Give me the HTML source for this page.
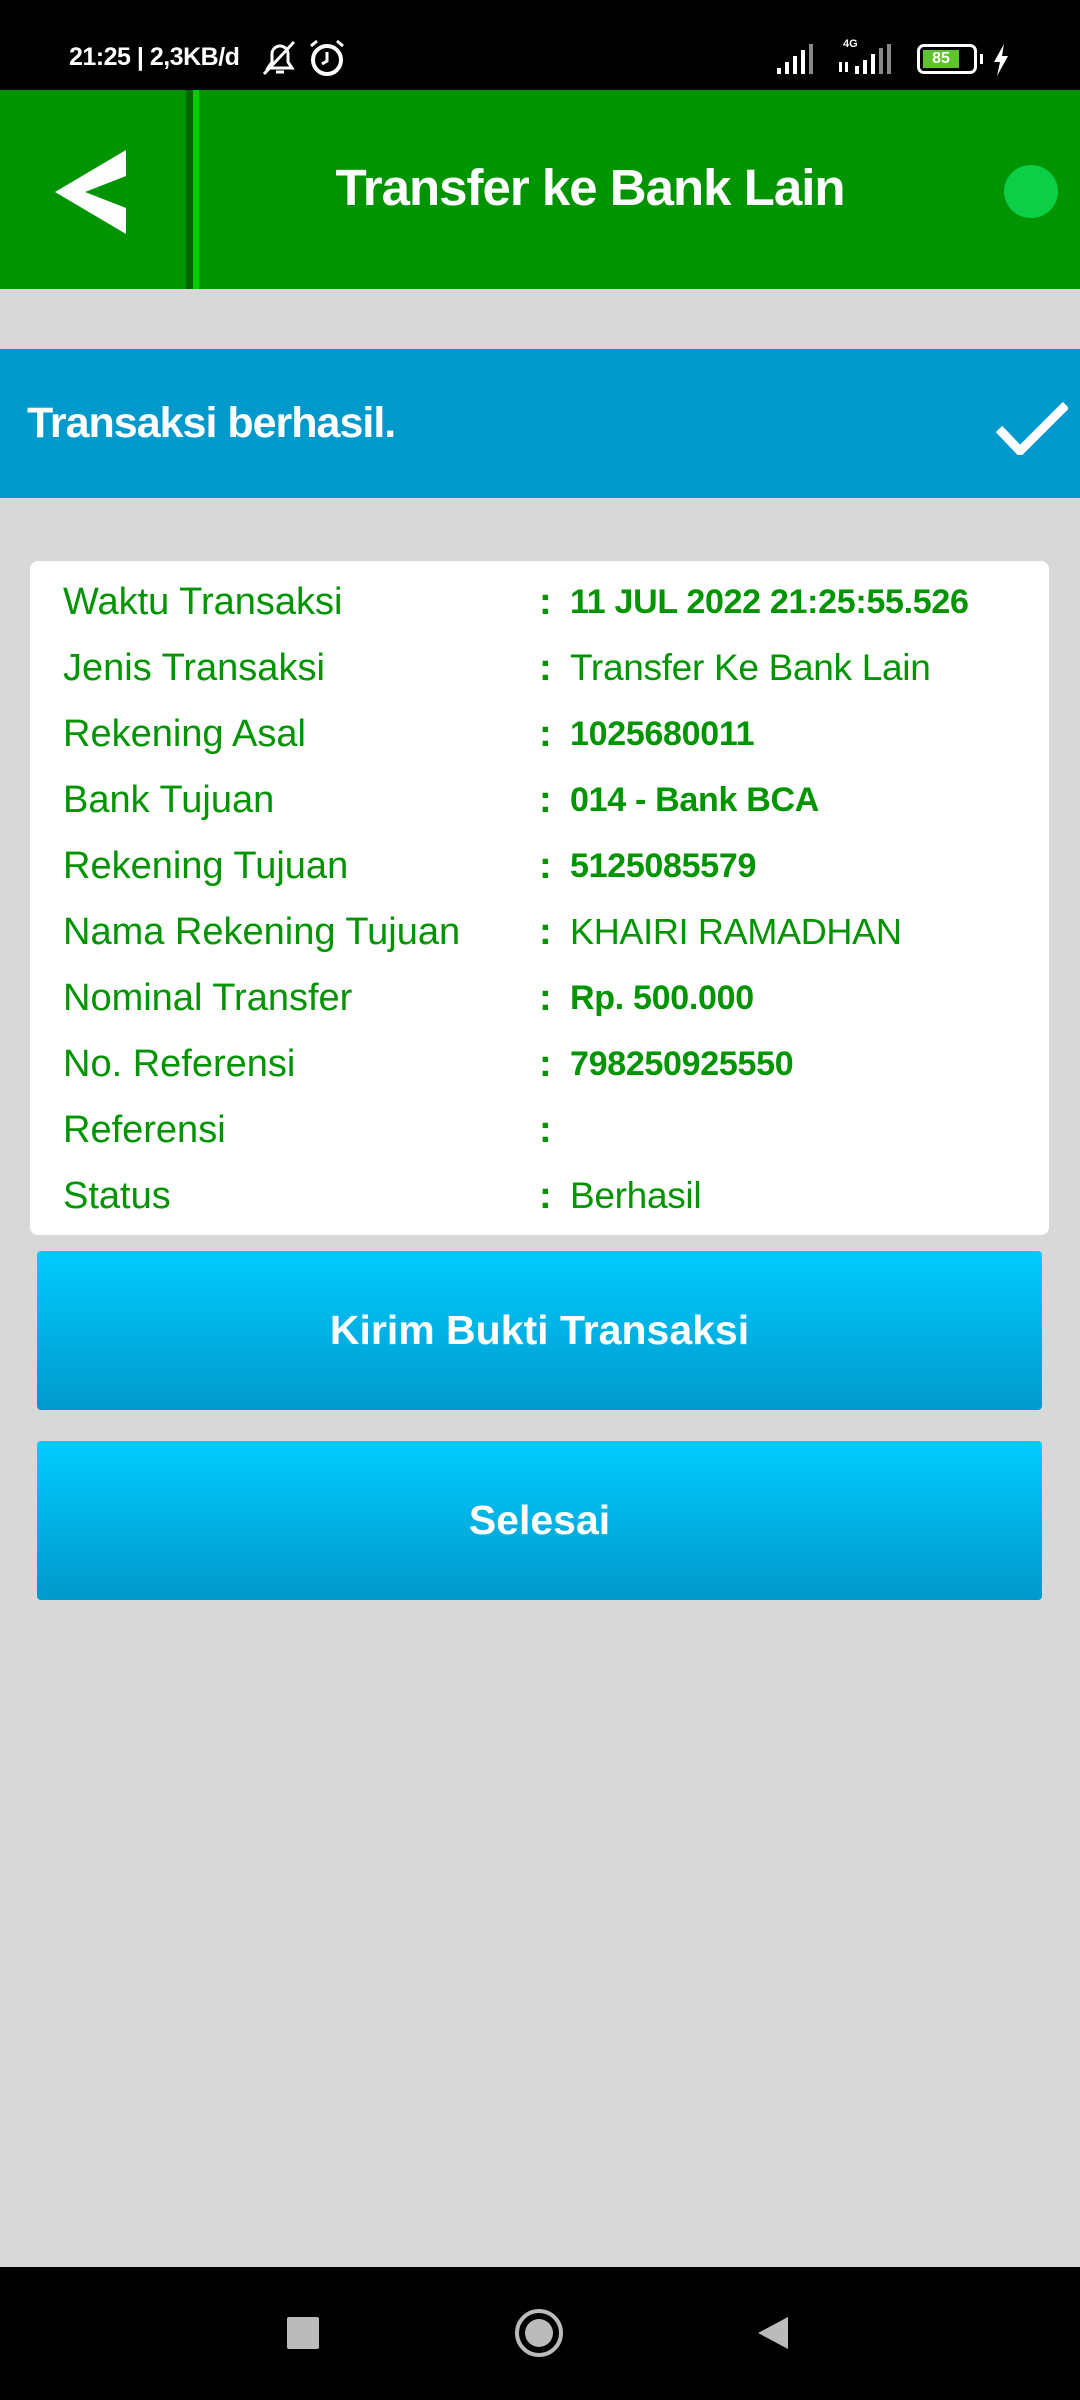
<!DOCTYPE html>
<html><head><meta charset="utf-8"><style>
*{margin:0;padding:0;box-sizing:border-box}
body{width:1080px;height:2400px;background:#d8d8d8;font-family:"Liberation Sans",sans-serif;position:relative;overflow:hidden}
.abs{position:absolute}
#sb{left:0;top:0;width:1080px;height:90px;background:#000;color:#fff}
#hd{left:0;top:90px;width:1080px;height:199px;background:#009500}
#bn{left:0;top:349px;width:1080px;height:149px;background:#0099cc}
#card{left:30px;top:561px;width:1019px;height:674px;background:#fff;border-radius:8px}
.row{position:absolute;left:33px;height:66px;line-height:66px;font-size:38px;color:#009400;white-space:nowrap}
.row .c{position:absolute;left:476px;font-weight:bold}
.row .v{position:absolute;left:507px;font-weight:bold;font-size:34px;letter-spacing:-0.3px}
.btn{position:absolute;left:37px;width:1005px;height:159px;border-radius:4px;background:linear-gradient(#00ccff,#0099cc);color:#fff;font-size:41px;font-weight:bold;text-align:center;line-height:159px}
#nav{left:0;top:2267px;width:1080px;height:133px;background:#000}
</style></head><body>
<div id="sb" class="abs">
 <div class="abs" style="left:69px;top:44px;font-size:25px;font-weight:bold;line-height:26px;letter-spacing:-0.5px">21:25 | 2,3KB/d</div>
 <svg class="abs" style="left:260px;top:38px" width="40" height="40" viewBox="0 0 40 40"><path d="M8 30h24l-4-6V16a8 8 0 0 0-16 0v8z M16 34h8 M4 36L34 4" stroke="#fff" stroke-width="3" fill="none"/></svg>
 <svg class="abs" style="left:305px;top:38px" width="44" height="40" viewBox="0 0 44 40"><circle cx="22" cy="22" r="14" stroke="#fff" stroke-width="4" fill="none"/><path d="M22 14v9l-5 3M6 8l6-5M38 8l-6-5" stroke="#fff" stroke-width="3" fill="none"/></svg>
 <svg class="abs" style="left:775px;top:42px" width="50" height="34"><rect x="2" y="26" width="4" height="6" fill="#fff"/><rect x="10" y="20" width="4" height="12" fill="#fff"/><rect x="18" y="14" width="4" height="18" fill="#fff"/><rect x="26" y="8" width="4" height="24" fill="#fff"/><rect x="34" y="2" width="4" height="30" fill="#888"/></svg>
 <div class="abs" style="left:843px;top:38px;font-size:11px;font-weight:bold">4G</div>
 <svg class="abs" style="left:837px;top:42px" width="68" height="34"><rect x="2" y="20" width="3" height="10" fill="#fff"/><rect x="8" y="20" width="3" height="10" fill="#fff"/><rect x="18" y="24" width="4" height="8" fill="#fff"/><rect x="26" y="18" width="4" height="14" fill="#fff"/><rect x="34" y="12" width="4" height="20" fill="#fff"/><rect x="42" y="6" width="4" height="26" fill="#888"/><rect x="50" y="2" width="4" height="30" fill="#888"/></svg>
 <div class="abs" style="left:917px;top:44px;width:60px;height:30px;border:3px solid #fff;border-radius:7px"><div style="margin:3px;height:18px;width:36px;background:#5fc32c;color:#fff;font-size:16px;text-align:center;line-height:18px;font-weight:bold">85</div></div>
 <div class="abs" style="left:980px;top:54px;width:3px;height:10px;background:#fff"></div>
 <svg class="abs" style="left:992px;top:44px" width="18" height="32"><path d="M12 0L2 18h6l-3 14 11-20h-6z" fill="#fff"/></svg>
</div>
<div id="hd" class="abs">
 <svg class="abs" style="left:55px;top:60px" width="72" height="84" viewBox="0 0 72 84"><path d="M71 0L0 42l71 42V58L30 42 71 26z" fill="#fff"/></svg>
 <div class="abs" style="left:186px;top:0;width:7px;height:199px;background:#006600"></div>
 <div class="abs" style="left:193px;top:0;width:6px;height:199px;background:#00cc00"></div>
 <div class="abs" style="left:200px;top:68px;width:780px;text-align:center;color:#fff;font-size:51px;font-weight:bold;line-height:60px;letter-spacing:-1px">Transfer ke Bank Lain</div>
 <div class="abs" style="left:1004px;top:75px;width:54px;height:53px;border-radius:50%;background:#0ccf47"></div>
</div>
<div id="bn" class="abs">
 <div class="abs" style="left:27px;top:46px;color:#fff;font-size:43px;font-weight:bold;line-height:56px;letter-spacing:-1px">Transaksi berhasil.</div>
 <svg class="abs" style="left:996px;top:52px" width="72" height="54" viewBox="0 0 72 54"><path d="M3 28l21 22L70 4" stroke="#fff" stroke-width="9" fill="none"/></svg>
</div>
<div id="card" class="abs">
 <div class="row" style="top:8px">Waktu Transaksi<span class="c">:</span><span class="v">11 JUL 2022 21:25:55.526</span></div>
 <div class="row" style="top:74px">Jenis Transaksi<span class="c">:</span><span class="v" style="font-weight:normal;font-size:37px">Transfer Ke Bank Lain</span></div>
 <div class="row" style="top:140px">Rekening Asal<span class="c">:</span><span class="v">1025680011</span></div>
 <div class="row" style="top:206px">Bank Tujuan<span class="c">:</span><span class="v">014 - Bank BCA</span></div>
 <div class="row" style="top:272px">Rekening Tujuan<span class="c">:</span><span class="v">5125085579</span></div>
 <div class="row" style="top:338px">Nama Rekening Tujuan<span class="c">:</span><span class="v" style="font-weight:normal;font-size:36px">KHAIRI RAMADHAN</span></div>
 <div class="row" style="top:404px">Nominal Transfer<span class="c">:</span><span class="v">Rp. 500.000</span></div>
 <div class="row" style="top:470px">No. Referensi<span class="c">:</span><span class="v">798250925550</span></div>
 <div class="row" style="top:536px">Referensi<span class="c">:</span></div>
 <div class="row" style="top:602px">Status<span class="c">:</span><span class="v" style="font-weight:normal;font-size:37px">Berhasil</span></div>
</div>
<div class="btn" style="top:1251px">Kirim Bukti Transaksi</div>
<div class="btn" style="top:1441px">Selesai</div>
<div id="nav" class="abs">
 <div class="abs" style="left:287px;top:50px;width:32px;height:32px;background:#bbb;border-radius:2px"></div>
 <div class="abs" style="left:515px;top:42px;width:48px;height:48px;border:4px solid #bbb;border-radius:50%"><div style="margin:6px;width:28px;height:28px;border-radius:50%;background:#bbb"></div></div>
 <svg class="abs" style="left:756px;top:48px" width="34" height="36"><path d="M32 2L2 18l30 16z" fill="#bbb"/></svg>
</div>
</body></html>
